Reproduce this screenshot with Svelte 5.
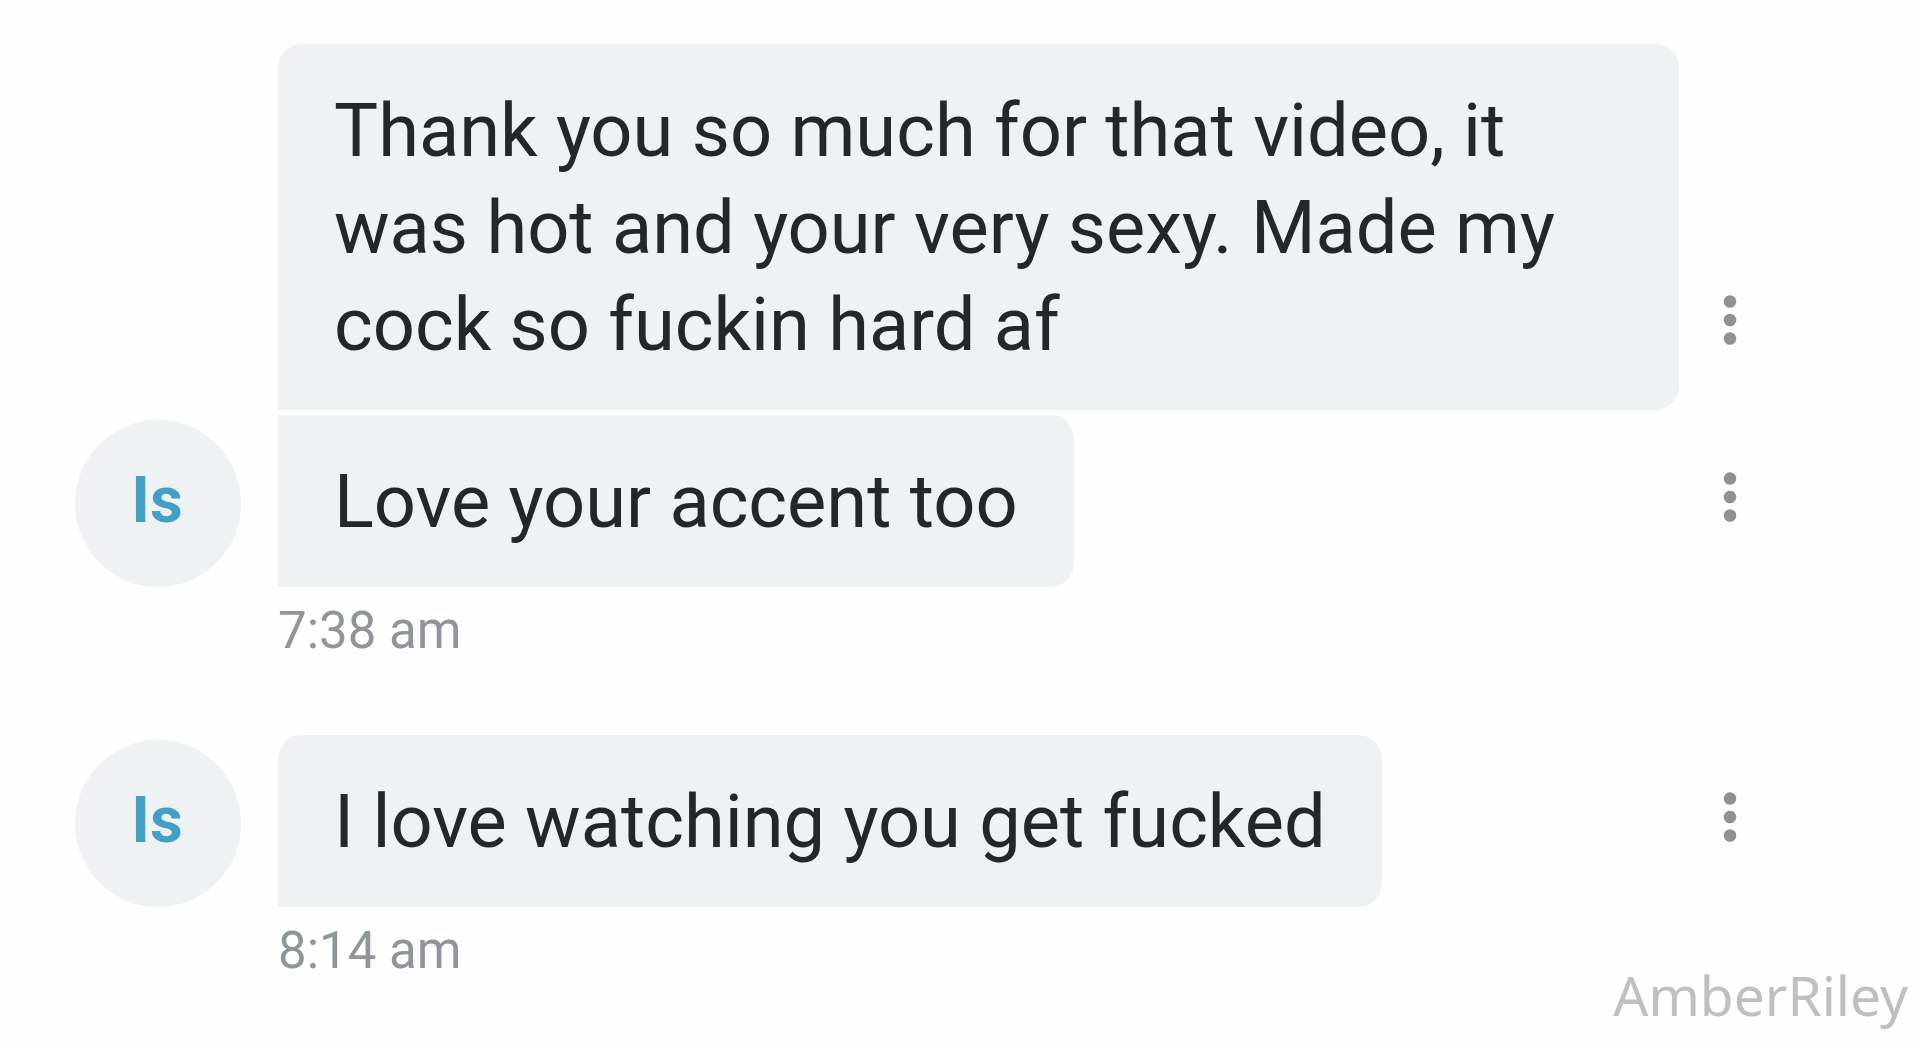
<script>
    let groups = [
        {
            initials: 'Is',
            time: '7:38 am',
            messages: [
                'Thank you so much for that video, it was hot and your very sexy. Made my cock so fuckin hard af',
                'Love your accent too'
            ]
        },
        {
            initials: 'Is',
            time: '8:14 am',
            messages: ['I love watching you get fucked']
        }
    ]
</script>

<main class="chat">
    {#each groups as group}
        <section class="group">
            {#each group.messages as message, i}
                <div class="row">
                    <div class="avatarWrapper">
                        {#if i === group.messages.length - 1}
                            <div class="avatar">{group.initials}</div>
                        {/if}
                    </div>
                    <div class="bubbleWrapper">
                        <p class="bubble" class:first={i === 0}>{message}</p>
                    </div>
                    <button class="menu" aria-label="Message options">
                        <svg width="14" height="52" viewBox="0 0 14 52" fill="currentColor">
                            <circle cx="7" cy="7.5" r="6.3"/>
                            <circle cx="7" cy="26" r="6.3"/>
                            <circle cx="7" cy="44.5" r="6.3"/>
                        </svg>
                    </button>
                </div>
            {/each}
            <time>{group.time}</time>
        </section>
    {/each}
    <div class="watermark">AmberRiley</div>
</main>

<style>
    :global(body){
        margin: 0;
        background: #fefefe;
    }
    .chat{
        position: relative;
        box-sizing: border-box;
        min-height: 100vh;
        padding: 44px 139px 0 75px;
        display: flex;
        flex-direction: column;
        gap: 75px;
        font-family: Roboto, sans-serif;
    }
    .group{
        display: flex;
        flex-direction: column;
        gap: 5px;
    }
    .row{
        display: flex;
        align-items: flex-end;
    }
    .avatarWrapper{
        flex: none;
        width: 166px;
        margin-right: 37px;
    }
    .avatar{
        box-sizing: border-box;
        height: 167px;
        padding: 0 2px 6px 0;
        display: flex;
        align-items: center;
        justify-content: center;
        border-radius: 50%;
        background: #eff2f3;
        color: #429fc6;
        font-size: 64px;
        font-weight: 700;
    }
    .bubbleWrapper{
        flex: 1;
        min-width: 0;
        display: flex;
    }
    .bubble{
        margin: 0;
        padding: 38px 56px 37px;
        border-radius: 0 24px 24px 0;
        background: #eef2f3;
        color: #242629;
        font-size: 74px;
        line-height: 97px;
    }
    .bubble.first{
        border-top-left-radius: 24px;
    }
    .menu{
        flex: none;
        width: 102px;
        height: 100px;
        margin-bottom: 40px;
        padding: 0;
        display: flex;
        align-items: center;
        justify-content: center;
        border: none;
        background: none;
        color: #8c9398;
        cursor: pointer;
    }
    time{
        margin: 9px 0 0 203px;
        color: #8f969b;
        font-size: 51px;
        line-height: 59px;
    }
    .watermark{
        position: absolute;
        right: 12px;
        bottom: 19px;
        color: #bfbfbf;
        font-family: "Noto Sans", "Open Sans", sans-serif;
        font-size: 55px;
        line-height: 60px;
    }
</style>
